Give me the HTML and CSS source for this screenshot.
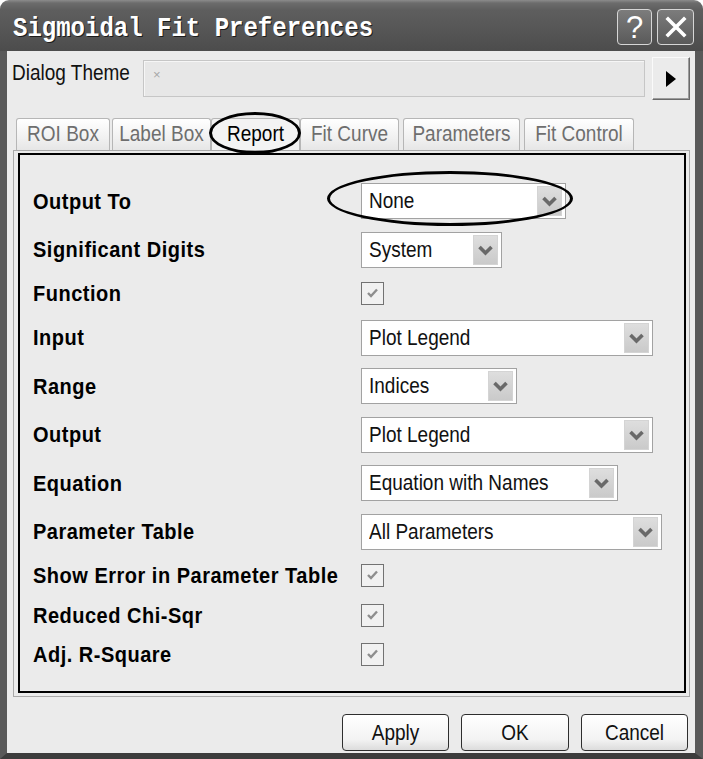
FILE: index.html
```html
<!DOCTYPE html>
<html>
<head>
<meta charset="utf-8">
<title>Sigmoidal Fit Preferences</title>
<link rel="stylesheet" href="styles.css">
</head>
<body>
<div class="window">
  <div class="titlebar">
    <span class="title">Sigmoidal Fit Preferences</span>
    <div class="caption-btns">
      <div class="cap-btn cap-help">?</div>
      <div class="cap-btn cap-close">
        <svg width="24" height="24" viewBox="0 0 24 24"><path d="M4 4 L20 20 M20 4 L4 20" stroke="#fff" stroke-width="3.6" stroke-linecap="square" fill="none"/></svg>
      </div>
    </div>
  </div>
  <div class="client">
    <div class="theme-row">
      <span class="theme-label"><span class="tall">Dialog Theme</span></span>
      <div class="theme-input"><span class="theme-x">×</span></div>
      <div class="theme-btn">
        <svg width="10" height="16" viewBox="0 0 10 16"><path d="M0 0 L10 8 L0 16 Z" fill="#000"/></svg>
      </div>
    </div>
    <div class="tabs">
      <div class="tab t-roi"><span class="tall">ROI Box</span></div>
      <div class="tab t-label"><span class="tall">Label Box</span></div>
      <div class="tab t-report active"><span class="tall">Report</span></div>
      <div class="tab t-curve"><span class="tall">Fit Curve</span></div>
      <div class="tab t-params"><span class="tall">Parameters</span></div>
      <div class="tab t-control"><span class="tall">Fit Control</span></div>
      <div class="ellipse ellipse-tab"></div>
    </div>
    <div class="panel">
      <div class="panel-inner">
        <div class="row dd out-row">
          <span class="label"><span class="tall">Output To</span></span>
          <div class="select w-none"><span class="sel-text">None</span><span class="arrow"><svg width="23" height="28" viewBox="0 0 23 28"><path d="M5.5 11 L11.5 17 L17.5 11" stroke="#696969" stroke-width="3.6" fill="none"/></svg></span></div>
          <div class="ellipse ellipse-out"></div>
        </div>
        <div class="row dd">
          <span class="label"><span class="tall">Significant Digits</span></span>
          <div class="select w-system"><span class="sel-text">System</span><span class="arrow"><svg width="23" height="28" viewBox="0 0 23 28"><path d="M5.5 11 L11.5 17 L17.5 11" stroke="#696969" stroke-width="3.6" fill="none"/></svg></span></div>
        </div>
        <div class="row cb">
          <span class="label"><span class="tall">Function</span></span>
          <span class="check"><svg width="19" height="19" viewBox="0 0 19 19"><path d="M5 9 L8 12 L14 5.5" stroke="#8e8e8e" stroke-width="2.4" fill="none"/></svg></span>
        </div>
        <div class="row dd">
          <span class="label"><span class="tall">Input</span></span>
          <div class="select w-input"><span class="sel-text">Plot Legend</span><span class="arrow"><svg width="23" height="28" viewBox="0 0 23 28"><path d="M5.5 11 L11.5 17 L17.5 11" stroke="#696969" stroke-width="3.6" fill="none"/></svg></span></div>
        </div>
        <div class="row dd">
          <span class="label"><span class="tall">Range</span></span>
          <div class="select w-range"><span class="sel-text">Indices</span><span class="arrow"><svg width="23" height="28" viewBox="0 0 23 28"><path d="M5.5 11 L11.5 17 L17.5 11" stroke="#696969" stroke-width="3.6" fill="none"/></svg></span></div>
        </div>
        <div class="row dd">
          <span class="label"><span class="tall">Output</span></span>
          <div class="select w-input"><span class="sel-text">Plot Legend</span><span class="arrow"><svg width="23" height="28" viewBox="0 0 23 28"><path d="M5.5 11 L11.5 17 L17.5 11" stroke="#696969" stroke-width="3.6" fill="none"/></svg></span></div>
        </div>
        <div class="row dd">
          <span class="label"><span class="tall">Equation</span></span>
          <div class="select w-eq"><span class="sel-text">Equation with Names</span><span class="arrow"><svg width="23" height="28" viewBox="0 0 23 28"><path d="M5.5 11 L11.5 17 L17.5 11" stroke="#696969" stroke-width="3.6" fill="none"/></svg></span></div>
        </div>
        <div class="row dd">
          <span class="label"><span class="tall">Parameter Table</span></span>
          <div class="select w-param"><span class="sel-text">All Parameters</span><span class="arrow"><svg width="23" height="28" viewBox="0 0 23 28"><path d="M5.5 11 L11.5 17 L17.5 11" stroke="#696969" stroke-width="3.6" fill="none"/></svg></span></div>
        </div>
        <div class="row cb">
          <span class="label"><span class="tall">Show Error in Parameter Table</span></span>
          <span class="check"><svg width="19" height="19" viewBox="0 0 19 19"><path d="M5 9 L8 12 L14 5.5" stroke="#8e8e8e" stroke-width="2.4" fill="none"/></svg></span>
        </div>
        <div class="row cb">
          <span class="label"><span class="tall">Reduced Chi-Sqr</span></span>
          <span class="check"><svg width="19" height="19" viewBox="0 0 19 19"><path d="M5 9 L8 12 L14 5.5" stroke="#8e8e8e" stroke-width="2.4" fill="none"/></svg></span>
        </div>
        <div class="row cb">
          <span class="label"><span class="tall">Adj. R-Square</span></span>
          <span class="check"><svg width="19" height="19" viewBox="0 0 19 19"><path d="M5 9 L8 12 L14 5.5" stroke="#8e8e8e" stroke-width="2.4" fill="none"/></svg></span>
        </div>
      </div>
    </div>
    <div class="buttons">
      <button class="btn btn-apply"><span class="tall">Apply</span></button>
      <button class="btn btn-ok"><span class="tall">OK</span></button>
      <button class="btn btn-cancel"><span class="tall">Cancel</span></button>
    </div>
  </div>
</div>
</body>
</html>
```

FILE: styles.css
```css
* { box-sizing: border-box; }

html, body {
  margin: 0;
  padding: 0;
  background: #ffffff;
}

body {
  font-family: "Liberation Sans", Arial, sans-serif;
  width: 703px;
  height: 759px;
  overflow: hidden;
}

.window {
  width: 703px;
  height: 759px;
  display: flex;
  flex-direction: column;
}

/* the source screenshot is slightly stretched vertically */
.tall {
  display: inline-block;
  transform: scaleY(1.13);
}

/* ---------- title bar ---------- */
.titlebar {
  height: 51px;
  flex: none;
  border-radius: 9px 9px 0 0;
  background: linear-gradient(#8c8c8c 0px, #6c6c6c 3px, #5e5e5e 10px, #565656 30px, #4c4c4c 51px);
  display: flex;
  align-items: center;
  padding: 0 9px 0 13px;
}

.title {
  flex: 1;
  font-family: "Liberation Mono", "Courier New", monospace;
  font-weight: bold;
  font-size: 24px;
  color: #ffffff;
  text-shadow: 1px 1px 0 #1c1c1c;
  margin-top: 5px;
  transform: scaleY(1.12);
  transform-origin: left center;
}

.caption-btns {
  display: flex;
  gap: 5px;
  margin-top: 3px;
}

.cap-btn {
  width: 36px;
  height: 36px;
  border: 1.5px solid #d6d6d6;
  border-radius: 4px;
  background: linear-gradient(#7c7c7c, #5a5a5a);
  display: flex;
  align-items: center;
  justify-content: center;
  color: #ffffff;
}

.cap-help {
  width: 35px;
  font-family: "Liberation Sans", Arial, sans-serif;
  font-size: 31px;
  line-height: 1;
}

.cap-close {
  width: 37px;
}

/* ---------- client ---------- */
.client {
  flex: 1;
  background: #ebebeb;
  border-left: 7px solid #595959;
  border-right: 8px solid #595959;
  border-bottom: 6px solid #3c3c3c;
  display: flex;
  flex-direction: column;
}

.theme-row {
  margin-top: 6px;
  height: 43px;
  flex: none;
  display: flex;
  align-items: center;
  padding: 0 5px;
}

.theme-label {
  width: 131px;
  font-size: 19px;
  color: #111;
  padding-bottom: 12px;
  white-space: nowrap;
}

.theme-input {
  width: 502px;
  height: 37px;
  border: 1px solid #c6c6c6;
  background: #e7e7e7;
  box-shadow: inset 1px 1px 0 #f6f6f6;
  padding: 4px 0 0 9px;
}

.theme-x {
  font-size: 13px;
  color: #a8a8a8;
}

.theme-btn {
  margin-left: 7px;
  width: 38px;
  height: 43px;
  background: #ebebeb;
  border: 1px solid;
  border-color: #fafafa #6a6a6a #6a6a6a #fafafa;
  box-shadow: inset -1px -1px 0 #9c9c9c;
  display: flex;
  align-items: center;
  justify-content: center;
}

/* ---------- tabs ---------- */
.tabs {
  position: relative;
  margin-top: 18px;
  height: 32px;
  flex: none;
  display: flex;
  align-items: flex-end;
  padding-left: 9px;
}

.tab {
  height: 32px;
  border: 1px solid #b6b6b6;
  border-bottom: none;
  border-radius: 3px 3px 0 0;
  background: linear-gradient(#ffffff, #f1f1f1 60%, #e6e6e6);
  color: #6e6e6e;
  font-size: 19px;
  line-height: 30px;
  text-align: center;
  white-space: nowrap;
}

.tab.active {
  color: #000;
  background: #f3f3f3;
}

.t-roi { width: 94px; margin-right: 2px; }
.t-label { width: 99px; }
.t-report { width: 89px; }
.t-curve { width: 99px; margin-right: 4px; }
.t-params { width: 117px; margin-right: 4px; }
.t-control { width: 110px; }

.ellipse {
  position: absolute;
  border: 3px solid #000;
  border-radius: 50%;
  z-index: 2;
  pointer-events: none;
}

.ellipse-tab {
  left: 202px;
  top: -6px;
  width: 92px;
  height: 42px;
}

/* ---------- panel ---------- */
.panel {
  margin: 0 5px 0 6px;
  height: 547px;
  flex: none;
  border: 1px solid #a9a9a9;
  padding: 2px 3px 3px 4px;
  background: #ebebeb;
}

.panel-inner {
  height: 100%;
  border: 2px solid #000;
  padding: 28px 0 0 13px;
  display: flex;
  flex-direction: column;
  gap: 12.5px;
}

.row {
  display: flex;
  align-items: center;
  flex: none;
}

.row.dd { height: 36px; }
.row.cb { height: 27px; }

.out-row { position: relative; }

.ellipse-out {
  left: 294px;
  top: -12px;
  width: 246px;
  height: 55px;
}

.label {
  width: 328px;
  flex: none;
  font-weight: bold;
  font-size: 20px;
  letter-spacing: 0.5px;
  color: #000;
  white-space: nowrap;
}

.select {
  height: 36px;
  border: 1px solid #a2a2a2;
  background: #ffffff;
  display: flex;
  align-items: center;
  justify-content: space-between;
  padding: 0 3px 0 7px;
}

.sel-text {
  display: inline-block;
  transform: scaleY(1.13);
  font-size: 19px;
  color: #111;
  white-space: nowrap;
}

.arrow {
  width: 25px;
  height: 30px;
  background: linear-gradient(#dedede, #cacaca);
  border: 1px solid #d4d4d4;
  display: flex;
}

.arrow svg { display: block; }

.w-none { width: 205px; }
.w-system { width: 141px; }
.w-input { width: 292px; }
.w-range { width: 156px; }
.w-eq { width: 257px; }
.w-param { width: 301px; }

.check {
  width: 23px;
  height: 23px;
  border: 1.5px solid #727272;
  background: #f1f1f1;
  display: flex;
  align-items: center;
  justify-content: center;
}

/* ---------- buttons ---------- */
.buttons {
  margin-top: 17px;
  height: 37px;
  flex: none;
  display: flex;
  justify-content: flex-end;
  gap: 12px;
  padding-right: 7px;
}

.btn {
  height: 37px;
  border: 1.5px solid #2e2e2e;
  border-radius: 4px;
  background: linear-gradient(#ffffff, #f3f3f3 70%, #dcdcdc);
  font-family: "Liberation Sans", Arial, sans-serif;
  font-size: 19px;
  color: #111;
  padding: 0;
}

.btn-apply { width: 107px; }
.btn-ok { width: 108px; }
.btn-cancel { width: 107px; }
```
